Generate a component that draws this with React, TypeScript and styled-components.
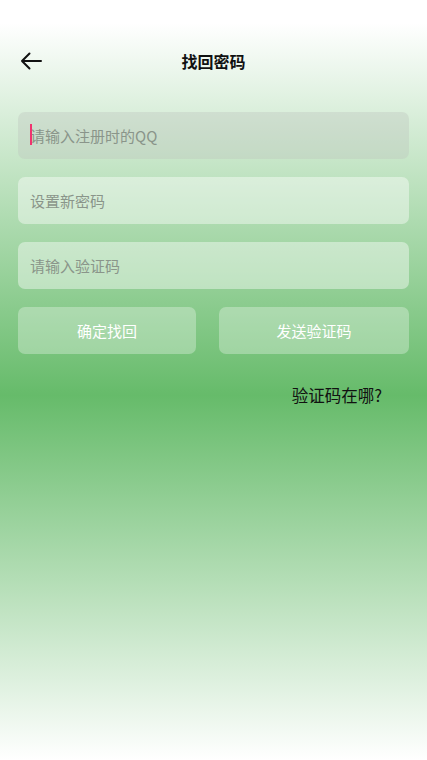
import React from "react";
import styled, { createGlobalStyle } from "styled-components";

const Global = createGlobalStyle`
  html, body { margin: 0; padding: 0; }
  body { font-family: "Noto Sans CJK SC", "Noto Sans", sans-serif; }
  * { box-sizing: border-box; }
`;

const Page = styled.div`
  width: 427px;
  height: 760px;
  background: linear-gradient(180deg, #ffffff 3%, #66bb6a 52%, #ffffff 100%);
  display: flex;
  flex-direction: column;
`;

const Header = styled.div`
  height: 62px;
  margin-top: 30px;
  display: grid;
  grid-template-columns: 60px 1fr 60px;
  align-items: center;
  padding-bottom: 1px;
`;

const Back = styled.button`
  border: 0;
  background: none;
  padding: 0 0 0 20px;
  height: 24px;
  display: flex;
  align-items: center;
  cursor: pointer;
`;

const Title = styled.h1`
  margin: 0;
  text-align: center;
  font-size: 16px;
  font-weight: 700;
  color: #111;
`;

const Form = styled.div`
  padding: 20px 18px 0;
  display: flex;
  flex-direction: column;
  gap: 18px;
`;

const Field = styled.div<{ $focused?: boolean }>`
  position: relative;
  height: 47px;
  border-radius: 7px;
  background: ${(p) => (p.$focused ? "rgba(190, 196, 190, 0.38)" : "rgba(255, 255, 255, 0.42)")};
  display: flex;
  align-items: center;
  padding: 0 12px;
`;

const Placeholder = styled.span`
  font-size: 15px;
  color: #8a958a;
`;

const Caret = styled.span`
  position: absolute;
  left: 12px;
  top: 12px;
  width: 2px;
  height: 21px;
  background: #f0336f;
`;

const Buttons = styled.div`
  display: grid;
  grid-template-columns: 178px 1fr;
  gap: 23px;
`;

const Action = styled.button`
  height: 47px;
  border: 0;
  border-radius: 7px;
  background: rgba(255, 255, 255, 0.3);
  color: #ffffff;
  font-family: inherit;
  font-size: 15px;
  cursor: pointer;
`;

const HelpRow = styled.div`
  display: flex;
  justify-content: flex-end;
  padding: 29px 45px 0 0;
`;

const Help = styled.span`
  font-size: 16.5px;
  color: #111;
`;

export default function App() {
  return (
    <>
      <Global />
      <Page>
        <Header>
          <Back aria-label="back">
            <svg width="22" height="18" viewBox="0 0 22 18" fill="none">
              <path d="M21 9H2M9.5 1.5L2 9l7.5 7.5" stroke="#111" strokeWidth="2" strokeLinecap="round" strokeLinejoin="round" />
            </svg>
          </Back>
          <Title>找回密码</Title>
          <div />
        </Header>
        <Form>
          <Field $focused>
            <Caret />
            <Placeholder>请输入注册时的QQ</Placeholder>
          </Field>
          <Field>
            <Placeholder>设置新密码</Placeholder>
          </Field>
          <Field>
            <Placeholder>请输入验证码</Placeholder>
          </Field>
          <Buttons>
            <Action>确定找回</Action>
            <Action>发送验证码</Action>
          </Buttons>
        </Form>
        <HelpRow>
          <Help>验证码在哪?</Help>
        </HelpRow>
      </Page>
    </>
  );
}
